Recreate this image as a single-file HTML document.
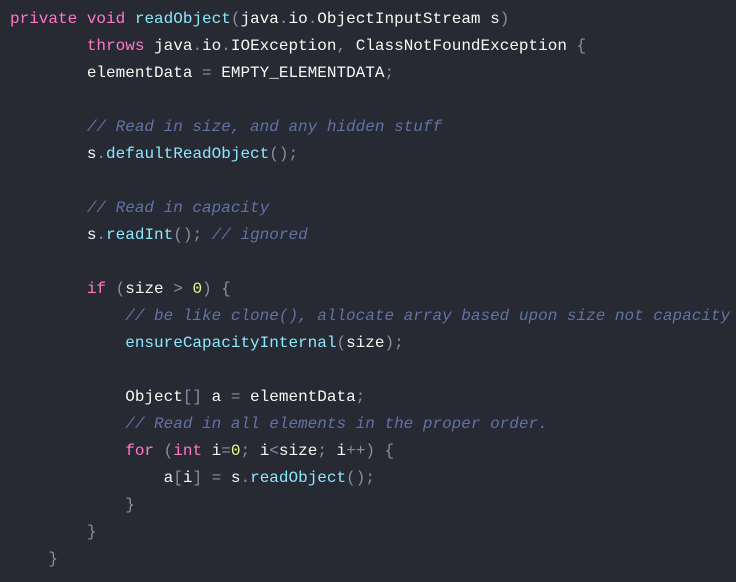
<!DOCTYPE html>
<html><head><meta charset="utf-8"><style>
html,body{margin:0;padding:0;background:#272933;width:736px;height:582px;overflow:hidden}
pre{margin:0;position:absolute;left:10px;top:-21px;font-family:"Liberation Mono",monospace;font-size:16px;line-height:27px;color:#f8f8f2;white-space:pre}
.k{color:#ff79c6}.f{color:#8be9fd}.c{color:#6272a4;font-style:italic}.p{color:#8a8f9c}.n{color:#f1fa8c}
</style></head><body>
<pre>    <span class="p">}</span>
<span class="k">private</span> <span class="k">void</span> <span class="f">readObject</span><span class="p">(</span>java<span class="p">.</span>io<span class="p">.</span>ObjectInputStream s<span class="p">)</span>
        <span class="k">throws</span> java<span class="p">.</span>io<span class="p">.</span>IOException<span class="p">,</span> ClassNotFoundException <span class="p">{</span>
        elementData <span class="p">=</span> EMPTY_ELEMENTDATA<span class="p">;</span>

        <span class="c">// Read in size, and any hidden stuff</span>
        s<span class="p">.</span><span class="f">defaultReadObject</span><span class="p">();</span>

        <span class="c">// Read in capacity</span>
        s<span class="p">.</span><span class="f">readInt</span><span class="p">();</span> <span class="c">// ignored</span>

        <span class="k">if</span> <span class="p">(</span>size <span class="p">&gt;</span> <span class="n">0</span><span class="p">)</span> <span class="p">{</span>
            <span class="c">// be like clone(), allocate array based upon size not capacity</span>
            <span class="f">ensureCapacityInternal</span><span class="p">(</span>size<span class="p">);</span>

            Object<span class="p">[]</span> a <span class="p">=</span> elementData<span class="p">;</span>
            <span class="c">// Read in all elements in the proper order.</span>
            <span class="k">for</span> <span class="p">(</span><span class="k">int</span> i<span class="p">=</span><span class="n">0</span><span class="p">;</span> i<span class="p">&lt;</span>size<span class="p">;</span> i<span class="p">++)</span> <span class="p">{</span>
                a<span class="p">[</span>i<span class="p">]</span> <span class="p">=</span> s<span class="p">.</span><span class="f">readObject</span><span class="p">();</span>
            <span class="p">}</span>
        <span class="p">}</span>
    <span class="p">}</span>
</pre>
</body></html>
